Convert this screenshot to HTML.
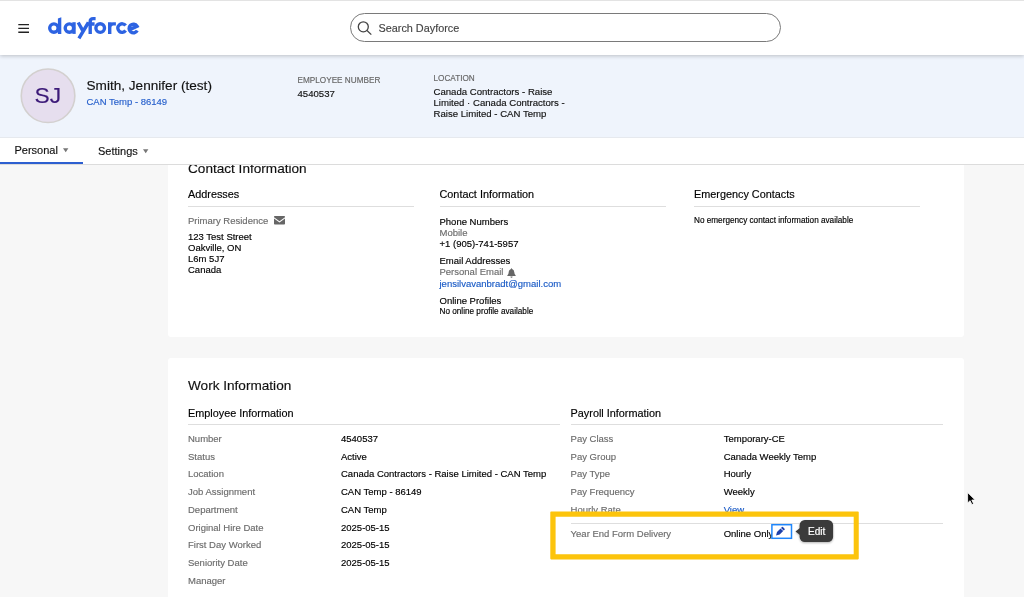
<!DOCTYPE html>
<html><head><meta charset="utf-8">
<style>
*{box-sizing:border-box;margin:0;padding:0}
html,body{width:1024px;height:597px;overflow:hidden;background:#f7f7f7;font-family:"Liberation Sans",sans-serif;color:#000}
.abs{position:absolute;white-space:nowrap}
#hdr{position:absolute;left:0;top:0;width:1024px;height:55px;background:#fff;border-top:1px solid #e3e3e3;box-shadow:0 1px 4px rgba(0,0,0,.22);z-index:5}
#banner{position:absolute;left:0;top:55px;width:1024px;height:83px;background:#eff4fc;border-bottom:1px solid #e6e9ee;z-index:4}
#nav{position:absolute;left:0;top:138px;width:1024px;height:27px;background:#fff;border-bottom:1px solid #dcdcdc;z-index:6}
.card{position:absolute;left:168px;width:796px;background:#fff;border-radius:3px}
.t{-webkit-text-stroke:0.15px;position:absolute;white-space:nowrap;line-height:1}
.lbl{color:#6c6c6c}
.f9{font-size:9.5px}
.f11{font-size:10.85px}
.hr{position:absolute;height:1px;background:#dedede}
.blue{color:#1a5bc6}
</style></head><body><div id="wrap" style="position:absolute;left:0;top:0;width:1024px;height:597px;will-change:transform;overflow:hidden">

<div id="hdr">
 <svg class="abs" style="left:18px;top:22px" width="12" height="11" viewBox="0 0 12 11"><path d="M0.3 1.6H11M0.3 5.4H11M0.3 9.2H11" stroke="#222" stroke-width="1.4" fill="none"/></svg>
 <svg class="abs" id="logo" style="left:44px;top:9px" width="100" height="35" viewBox="44 10 100 35" fill="none" stroke="#2d63e2" stroke-width="3.4">
  <circle cx="53.9" cy="28.1" r="4.2"/>
  <path d="M57.9 18.5L61.3 17.3V33.9H57.9Z" fill="#2d63e2" stroke="none"/>
  <circle cx="69.4" cy="28.1" r="4.2"/>
  <path d="M74 22.2V33.9"/>
  <path d="M78.2 22.5L83.6 32.2M88.4 22.5L78.9 38.3"/>
  <path d="M90.2 33.9V21.5Q90.2 18.6 93.2 18.6H95.6M87.2 24H94.6"/>
  <circle cx="100.2" cy="28.1" r="4.3"/>
  <path d="M109.7 33.9V22.2M109.7 28V27.5Q109.7 23.9 113.3 23.9H115.9"/>
  <path d="M125.6 25.6A4.3 4.3 0 1 0 125.6 30.6"/>
  <path d="M129.6 29.8L137 26.2A4.3 4.3 0 1 0 137.2 30.5"/>
 </svg>
 <div class="abs" style="left:350px;top:12px;width:431px;height:29px;border:1px solid #7a7a7a;border-radius:15px"></div>
 <svg class="abs" style="left:356px;top:19px" width="18" height="18" viewBox="356 20 18 18" fill="none" stroke="#444" stroke-width="1.3"><circle cx="363.3" cy="26.8" r="5"/><path d="M367 30.5L371.3 34.6"/></svg>
 <div class="t" style="left:378.5px;top:22px;font-size:10.85px;color:#444">Search Dayforce</div>
</div>

<div id="banner">
 <svg class="abs" style="left:18px;top:10px" width="60" height="62" viewBox="18 65 60 62"><circle cx="48.05" cy="95.75" r="26.8" fill="#e6deee" stroke="#d3d0cf" stroke-width="1.6"/></svg>
 <div class="t" style="left:34.6px;top:29px;font-size:22.8px;color:#3c1a78">SJ</div>
 <div class="t" style="left:86.5px;top:23.6px;font-size:13.6px;color:#111">Smith, Jennifer (test)</div>
 <div class="t" style="left:86.5px;top:41.5px;font-size:9.5px;color:#2760cc">CAN Temp - 86149</div>
 <div class="t" style="left:297.5px;top:21.8px;font-size:8.2px;color:#666">EMPLOYEE NUMBER</div>
 <div class="t" style="left:297.5px;top:33.9px;font-size:9.6px;color:#111">4540537</div>
 <div class="t" style="left:433.5px;top:20px;font-size:8.2px;color:#666">LOCATION</div>
 <div class="t" style="left:433.5px;top:31.1px;font-size:9.6px;line-height:11px;color:#111">Canada Contractors - Raise<br>Limited · Canada Contractors -<br>Raise Limited - CAN Temp</div>
</div>

<div id="nav">
 <div class="t" style="left:14.5px;top:7px;font-size:11px;color:#111">Personal</div>
 <svg class="abs" style="left:63px;top:10px" width="6" height="5"><path d="M0 0.3H5.4L2.7 4.3Z" fill="#777"/></svg>
 <div class="t" style="left:98px;top:7.5px;font-size:11px;color:#111">Settings</div>
 <svg class="abs" style="left:143px;top:10.5px" width="6" height="5"><path d="M0 0.3H5.4L2.7 4.3Z" fill="#777"/></svg>
 <div class="abs" style="left:0;top:24px;width:83px;height:2px;background:#2d5fd0"></div>
</div>

<!-- card 1 -->
<div class="card" style="top:140px;height:197px"><div style="position:absolute;left:-1px;top:0">
 <div class="t" style="left:21px;top:21.5px;font-size:13.6px;color:#111">Contact Information</div>
 <div class="t f11" style="left:21px;top:48.5px">Addresses</div>
 <div class="hr" style="left:21px;top:66px;width:226px"></div>
 <div class="t f9 lbl" style="left:21px;top:75.5px">Primary Residence</div>
 <svg class="abs" style="left:107px;top:76px" width="11" height="9" viewBox="0 0 11 9"><path d="M0.8 0H10.2Q11 0 11 0.8V1.3L5.5 5.2L0 1.3V0.8Q0 0 0.8 0ZM0 2.6L5.5 6.5L11 2.6V7.7Q11 8.5 10.2 8.5H0.8Q0 8.5 0 7.7Z" fill="#666"/></svg>
 <div class="t f9" style="left:21px;top:90.5px;line-height:11px">123 Test Street<br>Oakville, ON<br>L6m 5J7<br>Canada</div>

 <div class="t f11" style="left:272.5px;top:48.5px">Contact Information</div>
 <div class="hr" style="left:272.5px;top:66px;width:226px"></div>
 <div class="t f9" style="left:272.5px;top:77px">Phone Numbers</div>
 <div class="t f9 lbl" style="left:272.5px;top:87.5px">Mobile</div>
 <div class="t f9" style="left:272.5px;top:99px">+1 (905)-741-5957</div>
 <div class="t f9" style="left:272.5px;top:116px">Email Addresses</div>
 <div class="t f9 lbl" style="left:272.5px;top:127px">Personal Email</div>
 <svg class="abs" style="left:340px;top:127.5px" width="9" height="10" viewBox="0 0 9 10"><path d="M4.5 0.2Q5.1 0.2 5.1 0.9Q7.3 1.5 7.3 4.2Q7.3 6.3 8.7 7.4V8H0.3V7.4Q1.7 6.3 1.7 4.2Q1.7 1.5 3.9 0.9Q3.9 0.2 4.5 0.2ZM3.4 8.5H5.6Q5.5 9.7 4.5 9.7Q3.5 9.7 3.4 8.5Z" fill="#666"/></svg>
 <div class="t f9 blue" style="left:272.5px;top:138.5px">jensilvavanbradt@gmail.com</div>
 <div class="t f9" style="left:272.5px;top:156px">Online Profiles</div>
 <div class="t" style="left:272.5px;top:168px;font-size:8.2px">No online profile available</div>

 <div class="t f11" style="left:527px;top:48.5px">Emergency Contacts</div>
 <div class="hr" style="left:527px;top:66px;width:226px"></div>
 <div class="t" style="left:527px;top:77.3px;font-size:8.2px">No emergency contact information available</div>
</div></div>

<!-- card 2 -->
<div class="card" style="top:357.5px;height:260px"><div style="position:absolute;left:-1px;top:0">
 <div class="t" style="left:21px;top:21px;font-size:13.6px;color:#111">Work Information</div>
 <div class="t f11" style="left:21px;top:50px">Employee Information</div>
 <div class="hr" style="left:21px;top:66.5px;width:372px"></div>
 <div class="t f9 lbl" style="left:21px;top:76.40px">Number</div>
 <div class="t f9" style="left:174px;top:76.40px">4540537</div>
 <div class="t f9 lbl" style="left:21px;top:94.15px">Status</div>
 <div class="t f9" style="left:174px;top:94.15px">Active</div>
 <div class="t f9 lbl" style="left:21px;top:111.90px">Location</div>
 <div class="t f9" style="left:174px;top:111.90px">Canada Contractors - Raise Limited - CAN Temp</div>
 <div class="t f9 lbl" style="left:21px;top:129.65px">Job Assignment</div>
 <div class="t f9" style="left:174px;top:129.65px">CAN Temp - 86149</div>
 <div class="t f9 lbl" style="left:21px;top:147.40px">Department</div>
 <div class="t f9" style="left:174px;top:147.40px">CAN Temp</div>
 <div class="t f9 lbl" style="left:21px;top:165.15px">Original Hire Date</div>
 <div class="t f9" style="left:174px;top:165.15px">2025-05-15</div>
 <div class="t f9 lbl" style="left:21px;top:182.90px">First Day Worked</div>
 <div class="t f9" style="left:174px;top:182.90px">2025-05-15</div>
 <div class="t f9 lbl" style="left:21px;top:200.65px">Seniority Date</div>
 <div class="t f9" style="left:174px;top:200.65px">2025-05-15</div>
 <div class="t f9 lbl" style="left:21px;top:218.40px">Manager</div>
 <div class="t f9 lbl" style="left:403.6px;top:76.40px">Pay Class</div>
 <div class="t f9" style="left:556.7px;top:76.40px">Temporary-CE</div>
 <div class="t f9 lbl" style="left:403.6px;top:94.15px">Pay Group</div>
 <div class="t f9" style="left:556.7px;top:94.15px">Canada Weekly Temp</div>
 <div class="t f9 lbl" style="left:403.6px;top:111.90px">Pay Type</div>
 <div class="t f9" style="left:556.7px;top:111.90px">Hourly</div>
 <div class="t f9 lbl" style="left:403.6px;top:129.65px">Pay Frequency</div>
 <div class="t f9" style="left:556.7px;top:129.65px">Weekly</div>
 <div class="t f9 lbl" style="left:403.6px;top:147.40px">Hourly Rate</div>
 <div class="t f9 blue" style="left:556.7px;top:147.40px">View</div>
 <div class="t f9 lbl" style="left:403.6px;top:171.5px">Year End Form Delivery</div>
 <div class="t f9" style="left:556.7px;top:171.5px">Online Only</div>
 <div class="t f11" style="left:403.6px;top:50px">Payroll Information</div>
 <div class="hr" style="left:403.6px;top:66.5px;width:372px"></div>
 <div class="hr" style="left:403.6px;top:165.5px;width:372px"></div>
</div></div>

<!-- edit button -->
<svg class="abs" style="left:760px;top:510px;z-index:3;overflow:visible" width="90" height="45" viewBox="760 510 90 45">
 <defs><filter id="sh" x="-20%" y="-20%" width="140%" height="150%"><feGaussianBlur in="SourceAlpha" stdDeviation="1.2"/><feOffset dy="1"/><feComponentTransfer><feFuncA type="linear" slope="0.3"/></feComponentTransfer><feMerge><feMergeNode/><feMergeNode in="SourceGraphic"/></feMerge></filter></defs>
 <rect x="771.9" y="524.7" width="19.6" height="13.6" fill="#fff" stroke="#1f86fb" stroke-width="1.5"/>
 <g transform="translate(780.0 531.6) rotate(45)" fill="#1d40ab"><path d="M-1.9 -2.6H1.9V2.3L0 5.6L-1.9 2.3Z"/><path d="M-1.9 -3.3V-4.6Q-1.9 -5.3 -1.2 -5.3H1.2Q1.9 -5.3 1.9 -4.6V-3.3Z"/></g>
 <g filter="url(#sh)"><rect x="799.6" y="519.9" width="33.5" height="22" rx="5.2" fill="#3b3b3b"/><path d="M800 527.9L795.5 531.5L800 535.1Z" fill="#3b3b3b"/></g>
</svg>
<div class="t" style="left:807.8px;top:526.2px;font-size:10.05px;will-change:transform;transform:translateY(0.5px);color:#fff;z-index:4;-webkit-text-stroke:0.2px">Edit</div>
<!-- yellow box -->
<svg class="abs" style="left:540px;top:500px;z-index:2" width="330" height="70" viewBox="540 500 330 70"><path fill="#fcc40c" fill-rule="evenodd" d="M551.1 511.4H857.95Q858.75 511.4 858.75 512.2V558.6Q858.75 559.4 857.95 559.4H551.1Q550.3 559.4 550.3 558.6V512.2Q550.3 511.4 551.1 511.4ZM555.6 516.8V554.3H853.7V516.8Z"/></svg>
<!-- cursor -->
<svg class="abs" style="left:966px;top:491px;z-index:9" width="12" height="16" viewBox="0 0 12 16"><path d="M1.6 1.5V12L4.1 9.7L5.9 13.6L7.6 12.8L5.8 9H9.2Z" fill="#000" stroke="#fff" stroke-width="0.8"/></svg>

</div></body></html>
